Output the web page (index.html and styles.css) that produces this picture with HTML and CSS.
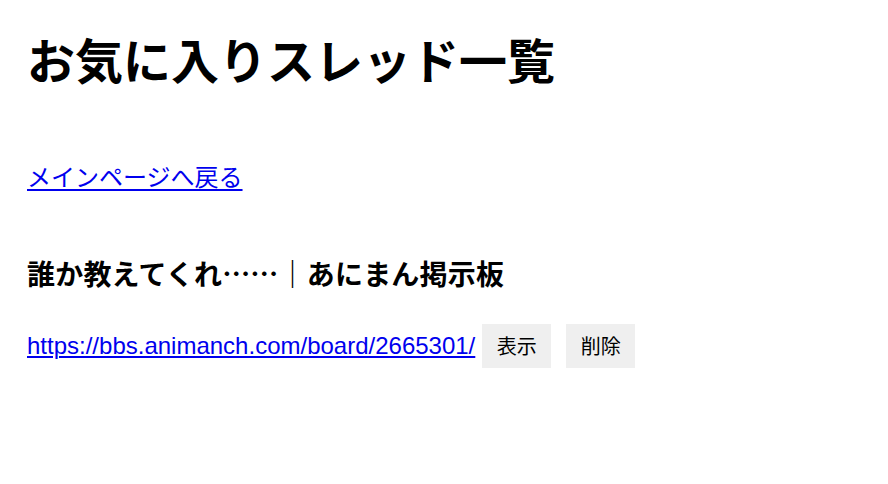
FILE: index.html
```html
<!DOCTYPE html>
<html lang="ja">
<head>
  <meta charset="UTF-8">
  <meta name="viewport" content="width=device-width, initial-scale=1.0">
  <title>お気に入りスレッド一覧</title>
  <link rel="stylesheet" href="styles.css">
</head>
<body>
  <h1>お気に入りスレッド一覧</h1>

  <p class="back"><a href="index.html">メインページへ戻る</a></p>

  <!-- Favorite threads -->
  <div class="thread">
    <h3>誰か教えてくれ……｜あにまん掲示板</h3>
    <div class="thread-row">
      <a class="thread-url" href="https://bbs.animanch.com/board/2665301/">https://bbs.animanch.com/board/2665301/</a>
      <button class="button">表示</button>
      <button class="button">削除</button>
    </div>
  </div>
</body>
</html>
```

FILE: styles.css
```css
body {
  font-family: "Noto Sans CJK JP", "Liberation Sans", sans-serif;
  background-color: #fff;
  color: #000;
  margin: 0;
  padding: 0 27px;
}

h1 {
  font-size: 48px;
  line-height: 58px;
  font-weight: bold;
  margin: 29px 0 0;
}

a {
  color: #0000ee;
  text-decoration-thickness: 2px;
  text-underline-offset: 3px;
}

.back {
  font-size: 24px;
  line-height: 36px;
  margin: 71px 0 0;
}

.thread h3 {
  font-size: 28px;
  line-height: 40px;
  font-weight: bold;
  letter-spacing: 0.2px;
  margin: 59px 0 0;
}

.thread-row {
  display: flex;
  align-items: center;
  gap: 7px;
  margin-top: 31px;
}

.thread-url {
  font-family: "Liberation Sans", Arial, sans-serif;
  font-size: 24px;
  line-height: 30px;
  text-decoration-thickness: 1.5px;
  text-underline-offset: 2px;
}

.button {
  font-family: "Noto Sans CJK JP", sans-serif;
  font-size: 20px;
  line-height: 30px;
  padding: 7px 14.5px;
  color: #000;
  background-color: #efefef;
  border: none;
  cursor: pointer;
}

.button + .button {
  margin-left: 8px;
}
```
